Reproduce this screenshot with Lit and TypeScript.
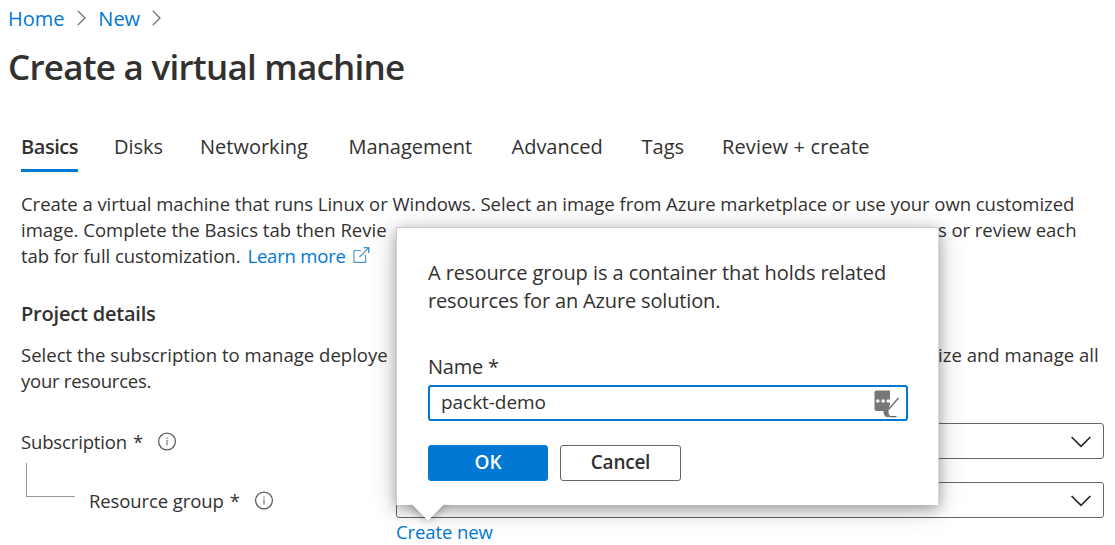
import { LitElement, html, css, svg } from "lit";
import { customElement, property, state } from "lit/decorators.js";
import { classMap } from "lit/directives/class-map.js";

const font = css`"Open Sans", "Noto Sans", sans-serif`;

@customElement("info-icon")
class InfoIcon extends LitElement {
  static styles = css`
    :host { display: block; width: 20px; height: 20px; }
    svg { display: block; }
  `;
  render() {
    return html`<svg width="20" height="20" viewBox="0 0 20 20" fill="none" stroke="#5d5d5d">
      <circle cx="10" cy="9.5" r="8.4" stroke-width="1.3" />
      <path d="M10 8.1v5.4M10 5.5v1.4" stroke-width="1.2" stroke="#777" />
    </svg>`;
  }
}

@customElement("select-box")
class SelectBox extends LitElement {
  static styles = css`
    :host {
      display: flex; align-items: center; justify-content: flex-end;
      box-sizing: border-box; height: 36px; padding: 1px 12px 0 0;
      border: 1px solid #666; border-radius: 3px; background: #fff;
    }
    svg { display: block; }
  `;
  render() {
    return html`<svg width="20" height="12" viewBox="0 0 20 12" fill="none" stroke="#262626" stroke-width="1.7">
      <path d="M0.6 1L10 10.3L19.4 1" />
    </svg>`;
  }
}

@customElement("name-callout")
class NameCallout extends LitElement {
  @property() value = "";

  static styles = css`
    :host { display: block; font: 20px/28px ${font}; color: #323130; }
    .panel {
      box-sizing: border-box; width: 543px; height: 278px;
      padding: 31px 30px 0 31px;
      border: 1px solid #ccc; border-right-color: #d8d8d8; border-bottom-color: #fff;
      background: #fff;
      box-shadow: 0 4px 12px rgba(0, 0, 0, 0.28), 0 4px 26px rgba(0, 0, 0, 0.2);
    }
    .beak { position: absolute; left: 2px; top: 277px; width: 60px; height: 30px; overflow: hidden; }
    .beak::before {
      content: ""; position: absolute; left: 19px; top: -10px; width: 22px; height: 22px;
      background: #fff; transform: rotate(45deg);
      box-shadow: 0 0 10px rgba(0, 0, 0, 0.4);
    }
    .text { margin: 0; white-space: nowrap; }
    .a { letter-spacing: -0.065px; }
    .b { letter-spacing: -0.15px; }
    .name { margin-top: 38px; letter-spacing: -0.2px; }
    .field {
      display: flex; align-items: center; justify-content: space-between;
      box-sizing: border-box; width: 480px; height: 36px; margin-top: 4px; padding: 0 6px 2px 11px;
      border: 2px solid #0078d4; border-radius: 3px;
      font-size: 19px; letter-spacing: -0.05px;
    }
    .field svg { display: block; margin-top: 3px; }
    .actions { display: flex; gap: 12px; margin-top: 24px; }
    button {
      box-sizing: border-box; height: 36px; padding: 0 0 2px; border-radius: 3px;
      font: 600 19px/28px ${font}; cursor: pointer;
    }
    .ok { width: 120px; border: 1px solid #0078d4; background: #0078d4; color: #fff; }
    .cancel { width: 121px; border: 1px solid #666; background: #fff; color: #323130; letter-spacing: -0.25px; }
  `;

  render() {
    return html`
      <div class="panel">
        <p class="text a">A resource group is a container that holds related</p>
        <p class="text b">resources for an Azure solution.</p>
        <div class="name">Name *</div>
        <div class="field">
          <span>${this.value}</span>
          <svg width="27" height="28" viewBox="0 0 27 28">
            <path d="M3.5 0.5H17V14.5L15.5 19.5C15 23 16 25.5 18.5 27H13.5C11 26 10.8 23 10.3 21H3.5Q1.5 21 1.5 19V2.5Q1.5 0.5 3.5 0.5Z" fill="#777" />
            <path d="M25.5 8L15.5 19.5M17 26.7H23.5" stroke="#666" stroke-width="1.2" fill="none" />
            ${[4.8, 10.1, 15.3].map((x) => svg`<circle cx=${x} cy="11" r="1.8" fill="#fff" />`)}
          </svg>
        </div>
        <div class="actions">
          <button class="ok">OK</button>
          <button class="cancel">Cancel</button>
        </div>
      </div>
      <div class="beak"></div>
    `;
  }
}

@customElement("app-root")
class AppRoot extends LitElement {
  @state() private active = "Basics";

  private tabs = ["Basics", "Disks", "Networking", "Management", "Advanced", "Tags", "Review + create"];

  static styles = css`
    :host {
      display: block; position: relative; box-sizing: border-box; width: 1115px; height: 545px;
      padding-top: 6px; overflow: hidden; background: #fff;
      font: 18.5px/26px ${font}; color: #323130; white-space: nowrap;
    }
    h1, h2, p { margin: 0; }
    a { color: #0078d4; text-decoration: none; }
    svg { display: block; }
    .crumbs { display: flex; align-items: center; padding-left: 8px; font-size: 20px; }
    .crumbs svg { margin: -2px 12px 0 13px; }
    .home { letter-spacing: -0.05px; }
    .new { letter-spacing: 0; }
    .new + svg { margin-left: 12px; }
    h1 { margin-top: 13px; padding-left: 8px; font-size: 35px; line-height: 44px; font-weight: 600; letter-spacing: -0.75px; }
    .tabs {
      display: grid; grid-template-columns: 93px 86px 148.5px 163px 130px 80.5px auto;
      justify-items: start; margin-top: 44px; padding-left: 21px;
      font-size: 20px; line-height: 28px; letter-spacing: 0;
    }
    .tab { box-sizing: border-box; height: 39px; border-bottom: 3px solid transparent; }
    .tab:last-child { letter-spacing: 0.14px; }
    .tab.active { width: 57px; border-color: #0078d4; font-weight: 600; letter-spacing: -0.45px; }
    .body { padding: 0 11px 0 21px; }
    .intro { margin-top: 19px; letter-spacing: -0.04px; }
    .split { display: flex; justify-content: space-between; letter-spacing: 0.01px; }
    .right-a { width: 166px; letter-spacing: -0.06px; }
    .right-b { width: 166px; letter-spacing: 0.03px; }
    .more { display: flex; align-items: center; }
    .more a { margin-left: 7px; letter-spacing: -0.2px; }
    .more svg { margin: 0 0 2px 7px; }
    h2 { margin-top: 32px; font-size: 20px; line-height: 26px; font-weight: 600; letter-spacing: -0.2px; }
    .details { margin-top: 15px; }
    .details .split { letter-spacing: 0.03px; }
    .tight { letter-spacing: -0.25px; }
    .row { display: grid; grid-template-columns: 375px 708px; height: 36px; margin-top: 23px; }
    .row.first { margin-top: 29px; }
    .label { display: flex; align-items: center; padding-top: 1px; }
    .star { margin-left: 6px; }
    .label info-icon { margin-left: 14px; }
    .sub { letter-spacing: -0.15px; }
    .elbow {
      align-self: flex-start; box-sizing: border-box; width: 49px; height: 34px;
      margin: -20px 14px 0 5px; border: solid #999; border-width: 0 0 1px 1px;
    }
    .group { letter-spacing: -0.1px; }
    .create { padding: 1px 0 0 375px; letter-spacing: -0.1px; }
    name-callout { position: absolute; left: 396px; top: 227px; }
  `;

  private chevron() {
    return html`<svg width="9" height="16" viewBox="0 0 9 16" fill="none" stroke="#666" stroke-width="1.2">
      <path d="M0.8 0.8L8 8L0.8 15.2" />
    </svg>`;
  }

  render() {
    return html`
      <nav class="crumbs">
        <a class="home">Home</a>${this.chevron()}<a class="new">New</a>${this.chevron()}
      </nav>
      <h1>Create a virtual machine</h1>
      <div class="tabs">
        ${this.tabs.map(
          (t) => html`<div class=${classMap({ tab: true, active: t === this.active })} @click=${() => (this.active = t)}>${t}</div>`
        )}
      </div>
      <div class="body">
        <div class="intro">
          <p>Create a virtual machine that runs Linux or Windows. Select an image from Azure marketplace or use your own customized</p>
          <p class="split"><span>image. Complete the Basics tab then Revie</span><span class="right-a">s or review each</span></p>
          <p class="more">
            <span>tab for full customization.</span><a>Learn more</a>
            <svg width="17" height="18" viewBox="0 0 17 18" fill="none" stroke="#4a94cc" stroke-width="1.1">
              <path d="M8 4.5H1V16.4H12.6V9M6.5 11L15.4 2" />
              <path d="M10.5 1.7H15.8V7" stroke="#0078d4" />
            </svg>
          </p>
        </div>
        <h2>Project details</h2>
        <div class="details">
          <p class="split"><span>Select the subscription to manage deploye</span><span class="right-b">ize and manage all</span></p>
          <p class="tight">your resources.</p>
        </div>
        <div class="row first">
          <div class="label"><span class="sub">Subscription</span><span class="star">*</span><info-icon></info-icon></div>
          <select-box></select-box>
        </div>
        <div class="row">
          <div class="label"><span class="elbow"></span><span class="group">Resource group</span><span class="star">*</span><info-icon></info-icon></div>
          <select-box></select-box>
        </div>
        <div class="create"><a>Create new</a></div>
      </div>
      <name-callout value="packt-demo"></name-callout>
    `;
  }
}
